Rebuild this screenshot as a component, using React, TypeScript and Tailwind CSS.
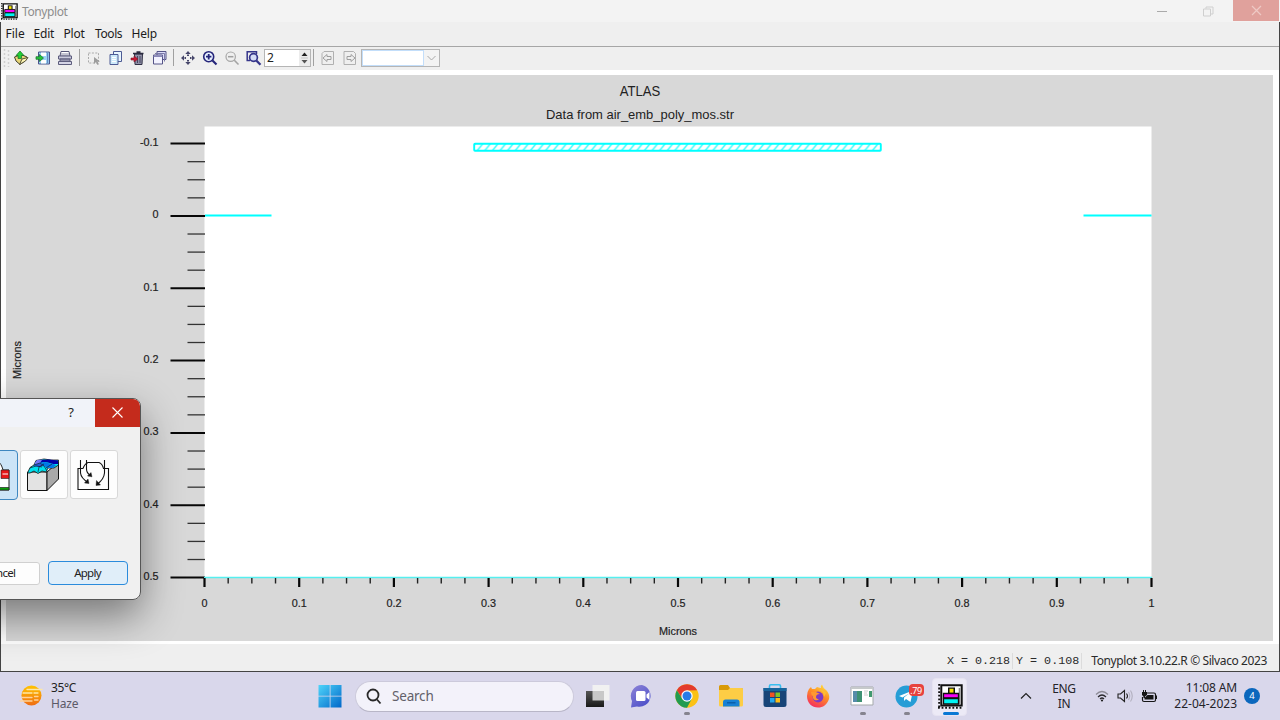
import React from "react";

const range = (n: number) => Array.from({ length: n }, (_, i) => i);

function StructureIcon({ size }: { size: number }) {
  return (
    <svg width={size} height={size} viewBox="0 0 25 25">
      <path d="M1.200 0V25" stroke="#111" strokeWidth="2" strokeDasharray="1.800 1.800" />
      <path d="M0 23.800H25" stroke="#111" strokeWidth="2" strokeDasharray="1.800 1.800" />
      <path d="M3.300 1.300H23.700V21.500H3.300Z" fill="#fff" stroke="#111" strokeWidth="2" />
      <path d="M21.500 4V20H4.500" stroke="#888" strokeWidth="1.600" fill="none" />
      <path d="M10 3.500H17V9H10Z" fill="#111" />
      <path d="M11.500 4.700H15.500V8.800H11.500Z" fill="#f4e400" />
      <path d="M5.500 9.500H20.500V14H5.500Z" fill="#f800f8" stroke="#111" strokeWidth="1.300" />
      <path d="M5.500 14.500H20.500V20H5.500Z" fill="#00f4f4" stroke="#111" strokeWidth="1.300" />
    </svg>
  );
}

function Tool({ children }: { children: React.ReactNode }) {
  return (
    <div className="flex w-[22px] shrink-0 items-center justify-center">
      <svg width="16" height="16" viewBox="0 0 16 16" fill="none">
        {children}
      </svg>
    </div>
  );
}

function Sep({ cls }: { cls: string }) {
  return <div className={"h-[17px] w-px shrink-0 bg-[#a0a0a0] " + cls} />;
}

function TitleBar() {
  return (
    <div className="flex h-[22px] shrink-0 items-center bg-[#f3f3f3]">
      <div className="ml-[1px] mr-[4px] flex">
        <StructureIcon size={17} />
      </div>
      <span className="mt-[2px] text-[12px] leading-[16px] tracking-[-0.400px] text-[#8d8d8d]">Tonyplot</span>
      <div className="ml-auto flex h-full">
        <div className="flex w-[46px] items-center justify-center">
          <div className="-ml-[4px] h-px w-[10px] bg-[#aaa]" />
        </div>
        <div className="flex w-[46px] items-center justify-center pr-[3px]">
          <svg width="11" height="11" viewBox="0 0 11 11" fill="none" stroke="#cfcfcf">
            <path d="M.5 3H7.500V10H.5ZM3 2.500V1H10V8H8" />
          </svg>
        </div>
        <div className="flex h-[21px] w-[46px] items-center justify-center bg-[#e0a19c]">
          <svg width="11" height="11" viewBox="0 0 11 11" stroke="#eec9c5" strokeWidth="1.200">
            <path d="M1 1L10 10M10 1L1 10" />
          </svg>
        </div>
        <div className="w-px bg-[#f3f3f3]" />
      </div>
    </div>
  );
}

function MenuBar() {
  return (
    <div className="flex h-[24px] shrink-0 items-center bg-[#efefef] pl-[4.500px] text-[12px] leading-[16px] text-[#1c1c1c]">
      <span className="w-[28px]">File</span>
      <span className="w-[30px] tracking-[-0.200px]">Edit</span>
      <span className="w-[31.500px] tracking-[-0.200px]">Plot</span>
      <span className="w-[36.500px] tracking-[-0.400px]">Tools</span>
      <span className="tracking-[-0.200px]">Help</span>
    </div>
  );
}

function ToolBar() {
  return (
    <div className="flex h-[24px] shrink-0 items-center border-t border-[#a6a6a6] bg-[#efefef] pb-[2px]">
      <svg width="9" height="20" viewBox="0 0 9 20" className="shrink-0">
        <path d="M3.500 1V19M7.500 2V19" stroke="#cfcfcf" strokeWidth="1.500" strokeDasharray="2 2" />
      </svg>
      <Tool>
        <path d="M1.500 7L8 4.500L14 7L12 11L7 14.500L3 11Z" fill="#e8d678" stroke="#44422e" />
        <path d="M6.500 14.500L9 9L15 7.500L12.500 11Z" fill="#fff7b4" stroke="#55523a" />
        <path d="M5 8.500V5.500H3L7 1L11 5.500H8.500V8.500Z" fill="#22cf35" stroke="#176824" strokeWidth=".7" />
      </Tool>
      <Tool>
        <path d="M3.500 2H14.500V14H3.500Z" fill="#9bd5f5" stroke="#4b548b" />
        <path d="M6 2.500H11V6H6ZM6 10H11V13.500H6Z" fill="#fff" />
        <path d="M12.700 3V13" stroke="#5b79b8" />
        <path d="M1 6.700H4.500V4.500L8.500 8L4.500 11.500V9.300H1Z" fill="#24c43a" stroke="#186b29" strokeWidth=".7" />
      </Tool>
      <Tool>
        <path d="M4 1.500H12L13 6H3Z" fill="#fff" stroke="#555577" />
        <path d="M1.500 6H14.500V9H1.500ZM3 9H13V11H3Z" fill="#c9c9dc" stroke="#5d5d7d" />
        <path d="M1.500 11.500H14.500V14.500H1.500Z" fill="#d5d5e6" stroke="#5d5d7d" />
        <path d="M4 4H12" stroke="#8a8aa5" />
      </Tool>
      <Sep cls="ml-[3px] mr-[3px]" />
      <Tool>
        <path d="M2.500 3H12.500V13H2.500Z" stroke="#aaa" strokeDasharray="2 1.400" />
        <path d="M8 7V14L10 12L11.500 15L12.900 14.300L11.500 11.500H14Z" fill="#9d9d9d" />
      </Tool>
      <Tool>
        <path d="M5.500 1.500H13.500V11.500H5.500Z" fill="#e8f6ff" stroke="#4d5b94" />
        <path d="M2 4.500H10V14.500H2Z" fill="#cdeafa" stroke="#4d5b94" />
        <path d="M4 7.500H8M4 9.500H8M4 11.500H8" stroke="#fff" />
      </Tool>
      <Tool>
        <path d="M4.500 4H12.500L12 14.500H5Z" fill="#9191a8" stroke="#303044" />
        <path d="M3 3.500H13.500M6.500 2H10.500" stroke="#2a2a3e" strokeWidth="1.600" />
        <path d="M7.500 6V13M10 6V13" stroke="#46465f" />
        <path d="M1 8H4V6L8 9L4 12V10H1Z" fill="#c91833" stroke="#78152a" strokeWidth=".6" />
      </Tool>
      <Tool>
        <path d="M5 1.500H14V9.500H5Z" fill="#dcdcf8" stroke="#555487" />
        <path d="M1.500 5H10.500V14H1.500Z" fill="#f3f3ff" stroke="#555487" />
        <path d="M3 3.500H12.500V11.500" stroke="#7b7aa8" />
        <path d="M1.500 6.200H10.500" stroke="#8583b5" strokeWidth="1.500" />
      </Tool>
      <Sep cls="ml-[2px] mr-[3px]" />
      <Tool>
        <g fill="#46466a">
          <path d="M8 1L10.700 4H5.300ZM8 15L5.300 12H10.700ZM1 8L4 5.300V10.700ZM15 8L12 10.700V5.300Z" />
          <path d="M7 4.500H9V6H7ZM7 10H9V11.500H7ZM4.500 7H6V9H4.500ZM10 7H11.500V9H10Z" />
        </g>
      </Tool>
      <Tool>
        <circle cx="6.700" cy="6.700" r="5" fill="#e8f1ff" stroke="#25257a" strokeWidth="1.600" />
        <path d="M6.700 4V9.400M4 6.700H9.400" stroke="#25257a" strokeWidth="1.800" />
        <path d="M10.500 10.500L14.500 14.500" stroke="#25257a" strokeWidth="2.200" />
      </Tool>
      <Tool>
        <circle cx="6.700" cy="6.700" r="4.700" stroke="#a7a7a7" strokeWidth="1.200" />
        <path d="M4 6.700H9.400" stroke="#a0a0a0" strokeWidth="1.500" />
        <path d="M10.300 10.300L14.500 14.500" stroke="#a3a3a3" strokeWidth="1.600" />
      </Tool>
      <Tool>
        <path d="M4 10.500H1.200V1.700H10.500V4" stroke="#36368b" strokeWidth="1.500" />
        <circle cx="7.500" cy="7.500" r="3.900" fill="#d5dcf6" stroke="#36368b" strokeWidth="1.700" />
        <path d="M10.300 10.500L14.500 14.800" stroke="#36368b" strokeWidth="2.300" />
      </Tool>
      <div className="-ml-px flex h-[18px] w-[47px] shrink-0 border border-[#b5b5b5] bg-white">
        <span className="flex-1 pl-[2px] text-[12px] leading-[16px] text-[#222]">2</span>
        <div className="flex w-[11px] items-center justify-center bg-[#ececec]">
          <svg width="7" height="12" viewBox="0 0 7 12">
            <path d="M.5 4L3.500 .5L6.500 4Z" fill="#222" />
            <path d="M.5 8L3.500 11.500L6.500 8Z" fill="#555" />
            <path d="M0 6H7" stroke="#c5c5c5" />
          </svg>
        </div>
      </div>
      <Sep cls="ml-[2px] mr-[3px]" />
      <Tool>
        <path d="M4 1.500H13.500V14.500H2V3.500Z" stroke="#b0b0b0" />
        <path d="M3 8L7 4.500V6.500H11V9.500H7V11.500Z" stroke="#9e9e9e" />
      </Tool>
      <Tool>
        <path d="M2 1.500H11.500L13.500 3.500V14.500H2Z" stroke="#b0b0b0" />
        <path d="M13 8L9 4.500V6.500H5V9.500H9V11.500Z" stroke="#9e9e9e" />
      </Tool>
      <div className="flex h-[18px] w-[79px] shrink-0 border border-[#b5b5b5] bg-white">
        <div className="flex-1 border border-[#c3defa]" />
        <div className="flex w-[15px] items-center justify-center bg-[#f3f3f3]">
          <svg width="9" height="6" viewBox="0 0 9 6" fill="none" stroke="#a8a8a8">
            <path d="M.5 1L4.500 5L8.500 1" />
          </svg>
        </div>
      </div>
    </div>
  );
}

const Y_LABELS = ["-0.1", "0", "0.1", "0.2", "0.3", "0.4", "0.5"];
const X_LABELS = ["0", "0.1", "0.2", "0.3", "0.4", "0.5", "0.6", "0.7", "0.8", "0.9", "1"];

function Plot() {
  return (
    <svg
      width="1267"
      height="566"
      viewBox="6 75 1267 566"
      className="block bg-[#d8d8d8]"
      fontFamily="'Liberation Sans', Arial, sans-serif"
      fill="#222"
    >
      <defs>
        <pattern id="hatch" width="7.600" height="8" patternUnits="userSpaceOnUse" x="476" y="143.500">
          <path d="M.5 8L7 0" stroke="#30ffff" strokeWidth="1.400" />
        </pattern>
      </defs>
      <rect x="204.500" y="126.500" width="947" height="451" fill="#fff" />
      <text x="640" y="96" fontSize="14" textAnchor="middle" textLength="40.500" lengthAdjust="spacingAndGlyphs">ATLAS</text>
      <text x="640" y="119" fontSize="13" textAnchor="middle" textLength="188" lengthAdjust="spacingAndGlyphs">Data from air_emb_poly_mos.str</text>
      {range(25).map((i) => (
        <path
          key={i}
          d={`M${i % 4 ? 187.500 : 170.500} ${143.600 + i * 18.083}H205`}
          stroke={i % 4 ? "#333" : "#080808"}
          strokeWidth={i % 4 ? 1.300 : 2}
        />
      ))}
      <g stroke="#222" strokeWidth=".2">
        {Y_LABELS.map((t, i) => (
          <text key={t} x="158.500" y={146 + i * 72.330} fontSize="10.800" textAnchor="end">
            {t}
          </text>
        ))}
        {X_LABELS.map((t, i) => (
          <text key={t} x={204.500 + i * 94.700} y="607" fontSize="10.800" textAnchor="middle">
            {t}
          </text>
        ))}
        <text x="678" y="635" fontSize="11" textAnchor="middle" textLength="38" lengthAdjust="spacingAndGlyphs">Microns</text>
        <text transform="translate(20.500 360) rotate(-90)" fontSize="11" textAnchor="middle" textLength="38" lengthAdjust="spacingAndGlyphs">Microns</text>
      </g>
      <path d="M204 577.500H1152" stroke="#55efef" strokeWidth="1.300" />
      {range(41).map((i) => (
        <path
          key={i}
          d={`M${204.500 + i * 23.675} 578V${i % 4 ? 583.500 : 587}`}
          stroke={i % 4 ? "#222" : "#080808"}
          strokeWidth={i % 4 ? 1.400 : 2.200}
        />
      ))}
      <rect x="474.200" y="143.800" width="406.600" height="7" fill="url(#hatch)" stroke="#00ffff" strokeWidth="1.900" rx=".8" />
      <path d="M205 215.500H271.500M1083.500 215.500H1151.500" stroke="#00ffff" strokeWidth="2" />
    </svg>
  );
}

function PlotDialog() {
  return (
    <div className="absolute -left-[60px] top-[398px] flex h-[202px] w-[201px] flex-col overflow-hidden rounded-[8px] border border-[#555] bg-[#f0f0f0]">
      <div className="flex h-[28px] shrink-0 items-start justify-end bg-[#f1f3f9]">
        <span className="mr-[21px] mt-[7px] text-[13px] leading-none text-[#222]">?</span>
        <div className="flex h-[28px] w-[45px] items-center justify-center bg-[#c42b1c] pb-[1px]">
          <svg width="11" height="11" viewBox="0 0 11 11" stroke="#fff" strokeWidth="1.100">
            <path d="M.5 .5L10.500 10.500M10.500 .5L.5 10.500" />
          </svg>
        </div>
      </div>
      <div className="mt-[23px] flex shrink-0 justify-end gap-[1px] pr-[22px]">
        <div className="flex h-[50px] w-[49px] items-center justify-end rounded-[4px] border border-[#3e87c0] bg-[#cce4f7] pr-[7px]">
          <svg width="32" height="34" viewBox="0 0 32 34">
            <path d="M2 32V12H10C14 0 22 0 25 12H31V32Z" fill="#fff" stroke="#222" />
            <path d="M23 12H31V20.500H23Z" fill="#e81818" stroke="#222" strokeWidth=".6" />
            <path d="M24.500 16H30" stroke="#fff" />
            <path d="M2 29.500H31V32H2Z" fill="#0aa00a" stroke="#222" strokeWidth=".7" />
          </svg>
        </div>
        <div className="ml-[1px] flex h-[49px] w-[48px] items-center justify-center rounded-[3px] border border-[#d8d8d8] bg-[#fdfdfd]">
          <svg width="34" height="34" viewBox="0 0 34 34" strokeLinejoin="round" className="-ml-[2px]">
            <path d="M1.500 14L21 14V32.500H1.500Z" fill="#e3e3e3" stroke="#111" />
            <path d="M21 14L32.500 4V21L21 32.500Z" fill="#a9a9a9" stroke="#111" />
            <path d="M1.500 15L4 9.500L8 7L10 2.500L18 1L25 2L32.500 2V7L28 10L22 10L20 14L16 13L12 15.500L8 13L4 15Z" fill="#00e0ee" stroke="#111" strokeWidth=".8" />
            <path d="M8.500 5.500L11 2L17 1.500L14 5L10 6.500Z" fill="#7777f5" />
            <path d="M16 2L23 1.500L32 2.500V6L27 6L22 4.500L18 4L14 5Z" fill="#0000a8" />
            <path d="M14 6L18 4L22 5L27 6L30 7L27 10L21 10L18 8Z" fill="#0078e8" />
            <path d="M8 7L14 5L18 8L13 9L8 8Z" fill="#2858d8" />
            <path d="M4 10L10 8L16 9M12 14L13 9L18 6M20 10L26 6M8 7L14 5L18 8L21 13" stroke="#123" strokeWidth=".7" fill="none" />
          </svg>
        </div>
        <div className="ml-[1px] flex h-[49px] w-[48px] items-center justify-center rounded-[3px] border border-[#d8d8d8] bg-[#fdfdfd]">
          <svg width="34" height="34" viewBox="0 0 34 34" fill="none" stroke="#111" strokeWidth="1.100" className="-ml-[2px]">
            <path d="M7 10.500H2V31.500H32.500V10.500H27.500Q26.500 6 23 4.500H12Q8.500 6 7 10.500" />
            <path d="M4.500 2V15Q5 20 12 24.500M10.500 2V11Q10.500 15 14.500 17.500M28.500 2V15Q28 21 21.500 26" />
            <path d="M13 25.500L8.500 25L12 21ZM16 18.800L11.500 18L15 14.500ZM20 27.500L20.500 22.500L24.500 27Z" fill="#111" strokeWidth=".4" />
          </svg>
        </div>
      </div>
      <div className="mb-[14px] mr-[12px] mt-auto flex shrink-0 items-center justify-end gap-[8px] text-[11.500px] leading-none tracking-[-0.750px] text-[#222]">
        <div className="flex h-[23px] w-[80px] items-center justify-center rounded-[3px] border border-[#d0d0d0] bg-[#fdfdfd] pr-[1px]">Cancel</div>
        <div className="flex h-[24px] w-[80px] items-center justify-center rounded-[4px] border border-[#2a8bdc] bg-[#e0eef9] pr-[1px]">Apply</div>
      </div>
    </div>
  );
}

function Slot({ children, run, active }: { children: React.ReactNode; run?: boolean; active?: boolean }) {
  return (
    <div className="relative flex h-[48px] w-[44px] shrink-0 items-center justify-center">
      {active && <div className="absolute left-[4px] top-[6px] h-[38px] w-[35px] rounded-[4px] border border-[#e6e3f1] bg-[#eceaf6]" />}
      <div className="relative flex">{children}</div>
      {run && <div className="absolute bottom-[5px] left-[20px] h-[3px] w-[6px] rounded-full bg-[#85838e]" />}
      {active && <div className="absolute bottom-[5px] left-[15px] h-[3px] w-[16px] rounded-full bg-[#0a78d4]" />}
    </div>
  );
}

function TaskBar() {
  return (
    <div className="flex h-[48px] shrink-0 items-center bg-[#d9d7eb]">
      <div className="flex w-[307px] shrink-0 items-center">
        <svg width="23" height="22" viewBox="0 0 23 22" className="ml-[20px] mr-[8px] shrink-0 overflow-visible">
          <defs>
            <linearGradient id="sun" x2="0" y2="1">
              <stop stopColor="#ffc400" />
              <stop offset="1" stopColor="#ef6c13" />
            </linearGradient>
          </defs>
          <circle cx="11.500" cy="10.500" r="10" fill="url(#sun)" />
          <g strokeLinecap="round" strokeWidth="1.300">
            <path d="M7 4.500H22M3 8H12M14 8H18" stroke="#ffe7a5" />
            <path d="M2 12.500H12M14.500 11.500H18M0 16H12M14.500 15H18" stroke="#ffd29a" />
          </g>
        </svg>
        <div className="text-[12px] leading-[16px]">
          <div className="tracking-[-0.350px] text-[#222]">35°C</div>
          <div className="tracking-[-0.200px] text-[#5c5a68]">Haze</div>
        </div>
      </div>
      <Slot>
        <svg width="24" height="24" viewBox="0 0 24 24" className="ml-px">
          <defs>
            <linearGradient id="win" x2="1" y2="1">
              <stop stopColor="#4fd4fa" />
              <stop offset="1" stopColor="#0067c9" />
            </linearGradient>
          </defs>
          <path d="M.5 1H11.700V11.700H.5ZM12.500 1H23.500V11.700H12.500ZM.5 12.500H11.700V23.500H.5ZM12.500 12.500H23.500V23.500H12.500Z" fill="url(#win)" />
        </svg>
      </Slot>
      <div className="ml-[4px] mr-[2px] flex h-[31px] w-[219px] shrink-0 items-center rounded-full border border-b-[#b8b6c7] border-[#cccadb] bg-[#f3f2fa]">
        <svg width="17" height="17" viewBox="0 0 17 17" fill="none" stroke="#292929" strokeWidth="1.800" className="ml-[9px] mr-[10px]">
          <circle cx="8" cy="7" r="5.500" />
          <path d="M12 11.500L15.500 15.500" />
        </svg>
        <span className="text-[13.500px] tracking-[-0.200px] text-[#626069]">Search</span>
      </div>
      <Slot>
        <svg width="24" height="24" viewBox="0 0 24 24">
          <defs>
            <linearGradient id="dark" y2="1" x2="0">
              <stop stopColor="#555" />
              <stop offset="1" stopColor="#191919" />
            </linearGradient>
          </defs>
          <path d="M6.500 1H23.500V16.500H6.500Z" fill="#f1f1f1" />
          <path d="M0 7H18V23H0Z" fill="url(#dark)" />
          <path d="M6.500 7H18V16.500H6.500Z" fill="#c8c8c8" />
        </svg>
      </Slot>
      <Slot>
        <svg width="24" height="24" viewBox="0 0 24 24">
          <defs>
            <linearGradient id="chat" x2=".7" y2="1">
              <stop stopColor="#8e84d7" />
              <stop offset="1" stopColor="#4d50c9" />
            </linearGradient>
          </defs>
          <path d="M12 1A11 11 0 1 1 7 22.500L1 23.500L2 17A11 11 0 0 1 12 1Z" fill="url(#chat)" />
          <rect x="6" y="7" width="9.500" height="10" rx="1.500" fill="#fff" />
          <path d="M16.500 10.500L19.500 8V16L16.500 13.500Z" fill="#fff" />
        </svg>
      </Slot>
      <Slot run>
        <svg width="24" height="24" viewBox="0 0 24 24" className="ml-px">
          <circle cx="12" cy="12" r="11.700" fill="#fbc116" />
          <path d="M1.870 6.150A11.700 11.700 0 0 1 22.130 6.150L12 6.500L7.200 14.500Z" fill="#e33b2e" />
          <path d="M1.870 6.150A11.700 11.700 0 0 0 12 23.700L16.800 14.800L7.200 14.800Z" fill="#219b50" />
          <circle cx="12" cy="12" r="5.700" fill="#fff" />
          <circle cx="12" cy="12" r="4.500" fill="#287be8" />
        </svg>
      </Slot>
      <Slot>
        <svg width="24" height="24" viewBox="0 0 24 24" className="ml-px">
          <path d="M0 2.500Q0 1 1.500 1H9L11 4H22.500Q24 4 24 5.500V10H0Z" fill="#d99a08" />
          <path d="M0 6H9L11 4H22.500Q24 4 24 5.500V21Q24 22.500 22.500 22.500H1.500Q0 22.500 0 21Z" fill="#fdcd45" />
          <path d="M4 22.500V18Q4 15.500 6.500 15.500H18Q20.500 15.500 20.500 18V22.500Z" fill="#1881d4" />
          <path d="M8 18.800H16.500" stroke="#0a579f" strokeWidth="1.200" />
        </svg>
      </Slot>
      <Slot>
        <svg width="24" height="24" viewBox="0 0 24 24" className="ml-px">
          <path d="M6.500 5V2Q6.500 .8 7.700 .8H16.300Q17.500 .8 17.500 2V5" fill="none" stroke="#38bdef" strokeWidth="1.600" />
          <path d="M.5 4H23.500V20.500Q23.500 23 21 23H3Q.5 23 .5 20.500Z" fill="#174478" />
          <path d="M.5 4H23.500V7H.5Z" fill="#17649c" />
          <path d="M7 8.500H11.500V13H7Z" fill="#f15323" />
          <path d="M12.500 8.500H17V13H12.500Z" fill="#80c528" />
          <path d="M7 14H11.500V18.500H7Z" fill="#22a8ed" />
          <path d="M12.500 14H17V18.500H12.500Z" fill="#fdbd16" />
        </svg>
      </Slot>
      <Slot>
        <svg width="24" height="24" viewBox="0 0 24 24">
          <defs>
            <linearGradient id="fox" x1=".8" y1="0" x2=".3" y2="1">
              <stop stopColor="#ffe43f" />
              <stop offset=".45" stopColor="#ff8d25" />
              <stop offset="1" stopColor="#f42b60" />
            </linearGradient>
          </defs>
          <path d="M3 5L5 3L6 5L9 5L11 3Q14 4 15 4Q14 2 16 .5Q17 4 20 6L21 7Q24 11 23 15C21 21 17 23.500 12 23.500C6 23.500 1 19 1 12Q1 8 3 5Z" fill="url(#fox)" />
          <circle cx="12" cy="13" r="5.400" fill="#803ac4" />
          <path d="M5 8Q9 7 12 9L14 10Q10 10 10 13Q10 15 13 15C10 18 6 15 7 12Q5 11 5 8Z" fill="#ff9831" />
          <path d="M12 6Q18 7 18 13L20 9Q17 4 12 6Z" fill="#ffbd35" />
        </svg>
      </Slot>
      <Slot run>
        <svg width="24" height="24" viewBox="0 0 24 24">
          <path d="M1 3H23V21H1Z" fill="#fff" stroke="#a5a9ab" />
          <path d="M1 3H23V5H1Z" fill="#c6c9cb" />
          <path d="M3 7H12V18H3Z" fill="#3e9173" />
          <path d="M3 7H7V18H3Z" fill="#568caa" />
          <path d="M14 7H18M14 9H17M14 11H18" stroke="#ccc" />
          <path d="M19 7H22V13H19Z" fill="#41996f" />
        </svg>
      </Slot>
      <Slot run>
        <svg width="24" height="24" viewBox="0 0 24 24" className="ml-px">
          <circle cx="11.500" cy="12.500" r="11" fill="#269dd6" />
          <path d="M4 12L18 6.500L15.500 18L11 15L9 17V13.500L14 9.500L7.500 13.500Z" fill="#fff" />
        </svg>
        <div className="absolute left-[15px] top-0 flex h-[12px] w-[15px] items-center justify-center rounded-[4px] bg-[#e7423d] text-[9px] leading-none tracking-[-0.400px] text-white">.79</div>
      </Slot>
      <Slot active>
        <StructureIcon size={25} />
      </Slot>
      <div className="ml-auto flex items-center text-[#242329]">
        <svg width="12" height="8" viewBox="0 0 12 8" fill="none" stroke="#222" strokeWidth="1.200">
          <path d="M1 6.500L6 1.500L11 6.500" />
        </svg>
        <div className="ml-[19px] w-[26px] text-center text-[12px] leading-[15.500px] tracking-[-0.300px]">
          <div>ENG</div>
          <div>IN</div>
        </div>
        <svg width="14" height="12" viewBox="0 0 14 12" fill="none" className="ml-[18px]">
          <path d="M1 4.500Q7 -1.500 13 4.500" stroke="#8d8b96" strokeWidth="1.200" />
          <path d="M3 7Q7 3 11 7M5 9Q7 7 9 9" stroke="#28272c" strokeWidth="1.200" />
          <circle cx="7" cy="10.500" r="1.100" fill="#222" />
        </svg>
        <svg width="16" height="14" viewBox="0 0 16 14" fill="none" className="ml-[8px]" strokeWidth="1.100">
          <path d="M1 5H3.500L7.500 1.500V12.500L3.500 9H1Z" stroke="#222" />
          <path d="M9.500 4.500Q11.500 7 9.500 9.500" stroke="#222" />
          <path d="M11.500 3Q14 7 11.500 11M13.500 1.500Q17 7 13.500 12.500" stroke="#b2b0bf" />
        </svg>
        <svg width="17" height="13" viewBox="0 0 17 13" className="ml-[8px]">
          <path d="M5.500 3H13Q14.500 3 14.500 4.500V10Q14.500 11.500 13 11.500H3Q1.500 11.500 1.500 10V7" fill="none" stroke="#161616" strokeWidth="1.200" />
          <path d="M6.500 5H12.500V9.500H3.500V8Z" fill="#161616" />
          <path d="M14.500 5.500H16V9H14.500Z" fill="#161616" />
          <path d="M1 2H2V0H3V2H4V0H5V2H6V5L4 6.500V8H2.500V6.500L1 5Z" fill="#161616" />
        </svg>
        <div className="ml-[15px] w-[64px] whitespace-nowrap text-[12px] leading-[16px]">
          <div className="flex justify-end tracking-[-0.150px]">11:08 AM</div>
          <div className="flex justify-end tracking-[0px]">22-04-2023</div>
        </div>
        <div className="ml-[7px] mr-[20px] flex size-[16px] items-center justify-center rounded-full bg-[#0b67bd] text-[9.500px] leading-none text-white">4</div>
      </div>
    </div>
  );
}

export default function App() {
  return (
    <div className="relative flex h-[720px] w-[1280px] flex-col overflow-hidden bg-[#efefef] font-['Noto_Sans',sans-serif]">
      <TitleBar />
      <div className="flex h-[650px] shrink-0 flex-col border-b border-l border-r border-[#444]">
        <MenuBar />
        <ToolBar />
        <div className="h-[574px] shrink-0 overflow-hidden bg-white pl-[5px] pt-[5px]">
          <Plot />
        </div>
        <div className="flex flex-1 items-center justify-end pt-[6px] text-[#2a2a2a]">
          <div className="border-r border-[#dcdcdc] pr-[2px] font-['Liberation_Mono',monospace] text-[11.700px] leading-[16px]">X = 0.218</div>
          <div className="border-r border-[#dcdcdc] pl-[3px] pr-[2px] font-['Liberation_Mono',monospace] text-[11.700px] leading-[16px]">Y = 0.108</div>
          <div className="ml-[9px] mr-[12px] text-[12px] leading-[16px] tracking-[-0.390px]">Tonyplot 3.10.22.R © Silvaco 2023</div>
        </div>
      </div>
      <div className="absolute -left-[60px] top-[398px] h-[202px] w-[201px] rounded-[8px] shadow-[0_16px_40px_rgba(0,0,0,0.45)] [clip-path:inset(-60px_-80px_-72px_0px)]" />
      <PlotDialog />
      <TaskBar />
    </div>
  );
}
